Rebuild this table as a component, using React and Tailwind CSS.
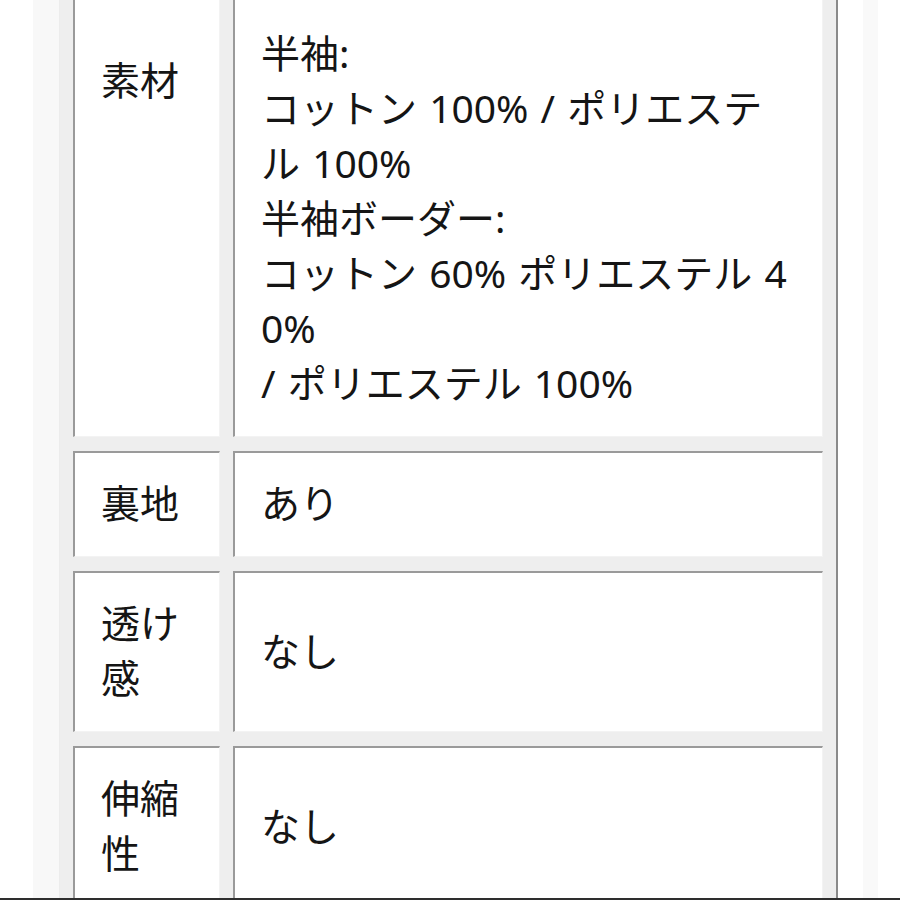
export default function App() {
  const font = { fontFamily: '"Noto Sans", "Noto Sans CJK JP", sans-serif' };
  const lines = [
    "半袖:",
    "コットン 100% / ポリエステ",
    "ル 100%",
    "半袖ボーダー:",
    "コットン 60% ポリエステル 4",
    "0%",
    "/ ポリエステル 100%",
  ];
  const labelCls =
    "w-[147px] align-top bg-white border-t-2 border-l-2 border-b border-r border-t-[#9a9a9a] border-l-[#9a9a9a] border-b-[#f3f3f3] border-r-[#f3f3f3] pl-[26px] pr-[20px] pt-[22px] pb-[26px]";
  const valueCls =
    "align-middle bg-white border-t-2 border-l-2 border-b border-r border-t-[#9a9a9a] border-l-[#9a9a9a] border-b-[#f3f3f3] border-r-[#f3f3f3] pl-[26px] pr-[20px] pt-[22px] pb-[26px] [word-spacing:2px]";
  return (
    <div
      className="h-[900px] w-[900px] overflow-hidden flex flex-col bg-white text-[#151515] text-[39px] leading-[55px]"
      style={font}
    >
      <div className="flex-1 overflow-hidden flex flex-row">
        <div className="w-[33px] shrink-0 bg-white" />
        <div className="w-[26px] shrink-0 bg-[#f8f8f8]" />
        <div className="w-[779px] shrink-0">
          <table className="w-[779px] -mt-[17px] table-fixed border-separate border-spacing-x-[13px] border-spacing-y-[14px] bg-[#eeeeee] border-l border-t border-r-2 border-b-2 border-l-[#ececec] border-t-[#ececec] border-r-[#8a8a8a] border-b-[#8a8a8a]">
            <tbody>
              <tr>
                <td className={labelCls + " !pt-[52px]"}>素材</td>
                <td className={valueCls + " !pt-[25px]"}>
                  {lines.map((l, i) => (
                    <div key={i} className="whitespace-pre">
                      {l}
                    </div>
                  ))}
                </td>
              </tr>
              <tr>
                <td className={labelCls}>裏地</td>
                <td className={valueCls}>あり</td>
              </tr>
              <tr>
                <td className={labelCls}>透け感</td>
                <td className={valueCls}>なし</td>
              </tr>
              <tr>
                <td className={labelCls}>伸縮性</td>
                <td className={valueCls}>なし</td>
              </tr>
            </tbody>
          </table>
        </div>
        <div className="w-[25px] shrink-0 bg-white" />
        <div className="w-[15px] shrink-0 bg-[#f9f9f9]" />
        <div className="flex-1 bg-white" />
      </div>
      <div className="h-[2px] shrink-0 bg-[#2e2e2e]" />
    </div>
  );
}
